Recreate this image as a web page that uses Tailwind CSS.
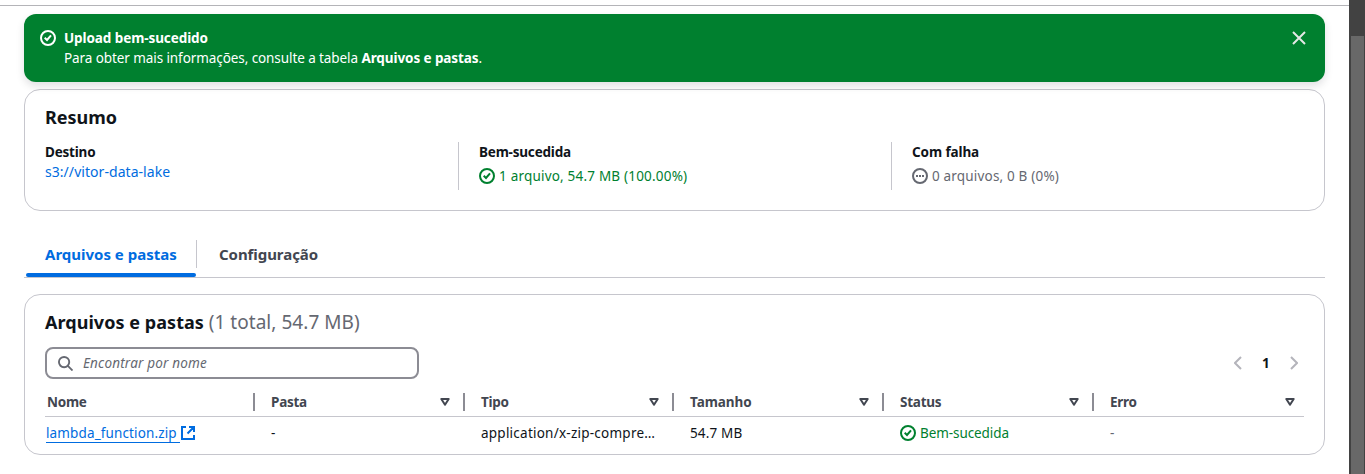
<!DOCTYPE html>
<html lang="pt-BR">
<head>
<meta charset="utf-8">
<title>Upload</title>
<script src="https://cdn.jsdelivr.net/npm/@tailwindcss/browser@4"></script>
</head>
<body class="bg-white font-['Noto_Sans',sans-serif] text-[13.5px] leading-5 text-[#0f141a]">
<svg class="hidden">
  <symbol id="ok" viewBox="0 0 16 16" fill="none" stroke="currentColor" stroke-width="2"><circle cx="8" cy="8" r="7"/><path d="m4.7 7.8 2.3 2.2 4-4.7"/></symbol>
  <symbol id="tri" viewBox="0 0 10 8" fill="none" stroke="currentColor" stroke-width="2" stroke-linejoin="round"><path d="M1.3 1h7.4L5 6.7z"/></symbol>
</svg>
<div class="flex h-[474px] w-[1365px] overflow-hidden">
  <main class="w-[1349px] px-6">
    <div class="-mx-6 h-1.5 border-b border-[#b4b4b8]"></div>
    <section class="relative mt-2 flex h-[68px] rounded-xl bg-[#00802f] pl-4 pr-[19px] pt-3.5 text-white shadow-[0_4px_8px_rgba(0,7,22,0.12)]">
      <svg class="mt-0.5 size-4"><use href="#ok"/></svg>
      <div class="ml-2 flex-1 whitespace-nowrap tracking-[-0.085px]">
        <p class="font-bold">Upload bem-sucedido</p>
        <p>Para obter mais informações, consulte a tabela <b>Arquivos e pastas</b>.</p>
      </div>
      <svg class="mt-[3px] size-3.5" viewBox="0 0 14 14" fill="none" stroke="#e4e8e6" stroke-width="2"><path d="m1 1 12 12M13 1 1 13"/></svg>
    </section>
    <section class="mt-[7px] h-[122px] rounded-2xl border border-[#c6c6cd] px-5 pt-[15px]">
      <h2 class="text-[18px] font-bold leading-6">Resumo</h2>
      <div class="mt-[13px] flex h-12 whitespace-nowrap">
        <div class="w-[413px]">
          <p class="font-bold tracking-[-0.2px]">Destino</p>
          <p class="tracking-[0.05px] text-[14px] text-[#006ce0]">s3://vitor-data-lake</p>
        </div>
        <div class="w-[433px] border-l border-[#c6c6cd] pl-5">
          <p class="font-bold tracking-[-0.2px]">Bem-sucedida</p>
          <p class="mt-1 flex items-center gap-1 tracking-[0.2px] text-[#00802f]"><svg class="size-4"><use href="#ok"/></svg>1 arquivo, 54.7 MB (100.00%)</p>
        </div>
        <div class="border-l border-[#c6c6cd] pl-5">
          <p class="font-bold tracking-[-0.1px]">Com falha</p>
          <p class="mt-1 flex items-center gap-1 tracking-[0.18px] text-[#656871]"><svg class="size-4" viewBox="0 0 16 16"><circle cx="8" cy="8" r="7" fill="none" stroke="currentColor" stroke-width="2"/><path d="M4 7h2v2H4zM7 7h2v2H7zM10 7h2v2h-2z" fill="currentColor"/></svg>0 arquivos, 0 B (0%)</p>
        </div>
      </div>
    </section>
    <nav class="mt-7 flex h-[39px] border-b border-[#c6c6cd] text-[15px] font-bold leading-[31px]">
      <div class="relative ml-0.5 w-[170px] pl-[19px] text-[#006ce0]">Arquivos e pastas<i class="absolute bottom-0 left-0 h-1 w-full rounded-sm bg-[#006ce0]"></i></div>
      <div class="mt-px h-7 border-l border-[#c6c6cd] pl-[22px] leading-[29px] tracking-[-0.06px] text-[#424650]">Configuração</div>
    </nav>
    <section class="mt-4 h-[161px] rounded-2xl border border-[#c6c6cd] px-5 pt-[15px]">
      <h2 class="text-[18px] font-bold leading-6"><span class="tracking-[0.05px]">Arquivos e pastas</span> <span class="text-[19px] font-normal tracking-[0.05px] text-[#656871]">(1 total, 54.7 MB)</span></h2>
      <div class="mt-[13px] flex h-8 items-center justify-between">
        <div class="flex h-8 w-[374px] items-center rounded-lg border-2 border-[#8c8c94] pl-[11px] italic tracking-[0.18px] text-[#656871]">
          <svg class="size-[15px]" viewBox="0 0 16 16" fill="none" stroke="currentColor" stroke-width="2"><circle cx="6.5" cy="6.5" r="5.5"/><path d="m10.5 10.5 5 5"/></svg>
          <span class="ml-2.5">Encontrar por nome</span>
        </div>
        <div class="flex items-center pr-1.5 text-[#b4b4bb]">
          <svg class="h-3.5 w-2" viewBox="0 0 8 14" fill="none" stroke="currentColor" stroke-width="2"><path d="M7 1 1 7l6 6"/></svg>
          <b class="mx-5 w-2 text-[#0f141a]">1</b>
          <svg class="h-3.5 w-2" viewBox="0 0 8 14" fill="none" stroke="currentColor" stroke-width="2"><path d="m1 1 6 6-6 6"/></svg>
        </div>
      </div>
      <div class="mt-3.5 grid h-6 w-[1259px] grid-cols-[210px_210px_209px_210px_210px_210px] items-start border-b border-[#c6c6cd] font-bold tracking-[-0.25px] text-[#424650]">
        <div class="flex h-[18px] items-center border-r-2 border-[#8c8c94] pl-0.5">Nome</div>
        <div class="flex h-[18px] items-center justify-between border-r-2 border-[#8c8c94] pl-4 pr-[13px]">Pasta<svg class="h-2 w-2.5"><use href="#tri"/></svg></div>
        <div class="flex h-[18px] items-center justify-between border-r-2 border-[#8c8c94] pl-4 pr-[13px]">Tipo<svg class="h-2 w-2.5"><use href="#tri"/></svg></div>
        <div class="flex h-[18px] items-center justify-between border-r-2 border-[#8c8c94] pl-4 pr-[13px] tracking-[-0.05px]">Tamanho<svg class="h-2 w-2.5"><use href="#tri"/></svg></div>
        <div class="flex h-[18px] items-center justify-between border-r-2 border-[#8c8c94] pl-4 pr-[13px]">Status<svg class="h-2 w-2.5"><use href="#tri"/></svg></div>
        <div class="flex h-[18px] items-center justify-between pl-4 pr-[9px]">Erro<svg class="h-2 w-2.5"><use href="#tri"/></svg></div>
      </div>
      <div class="mt-1.5 grid w-[1259px] grid-cols-[210px_210px_209px_210px_210px_210px] whitespace-nowrap">
        <div class="flex pl-px tracking-[0.13px] text-[#006ce0]"><span class="h-5 w-[134px] border-b border-[#006ce0]">lambda_function.zip</span><svg class="mt-0.5 size-4" viewBox="0 0 16 16" fill="none" stroke="currentColor" stroke-width="2"><path d="M6 2H2v12h12v-4M9 2h5v5M14 2 7.5 8.5"/></svg></div>
        <div class="pl-4">-</div>
        <div class="pl-4 tracking-[0.24px]">application/x-zip-compre…</div>
        <div class="pl-4 tracking-[0.15px]">54.7 MB</div>
        <div class="flex items-center gap-1 pl-4 tracking-[-0.08px] text-[#00802f]"><svg class="size-4"><use href="#ok"/></svg>Bem-sucedida</div>
        <div class="pl-4 text-[#656871]">-</div>
      </div>
    </section>
  </main>
  <div class="w-4 bg-[#424242] pl-0.5 pr-px pt-9"><div class="h-full bg-[#686868]"></div></div>
</div>
</body>
</html>
